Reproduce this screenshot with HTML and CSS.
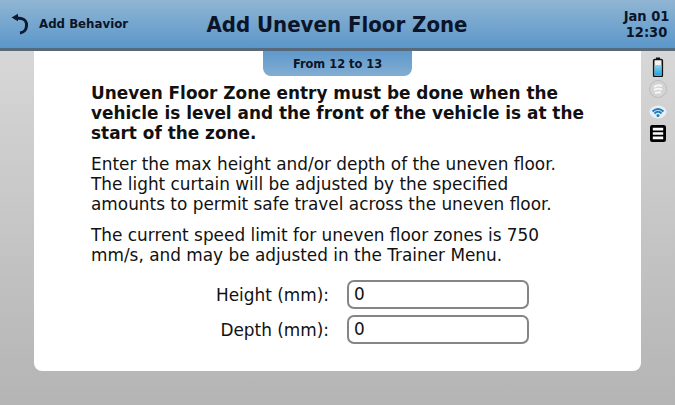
FILE: index.html
```html
<!DOCTYPE html>
<html lang="en">
<head>
  <meta charset="UTF-8" />
  <title>Add Uneven Floor Zone</title>
  <link rel="stylesheet" href="styles.css">
</head>
<body>
  <header class="topbar">
    <div class="back">
      <svg class="back-icon" width="20" height="24" viewBox="0 0 20 24">
        <path d="M1.5 5.5 L8 1.8 L8 9.2 Z" fill="#0d1a30"/>
        <path d="M5 5.8 L11 6.4 C18.6 7 18.6 20 10 21" fill="none" stroke="#0d1a30" stroke-width="3"/>
      </svg>
      <span>Add Behavior</span>
    </div>
    <h1>Add Uneven Floor Zone</h1>
    <div class="clock">Jan 01<br>12:30</div>
  </header>

  <div class="main">
    <div class="card">
      <div class="tab">From 12 to 13</div>
      <div class="copy">
        <p class="warn">Uneven Floor Zone entry must be done when the vehicle is level and the front of the vehicle is at the start of the zone.</p>
        <p>Enter the max height and/or depth of the uneven floor.<br>The light curtain will be adjusted by the specified<br>amounts to permit safe travel across the uneven floor.</p>
        <p>The current speed limit for uneven floor zones is 750<br>mm/s, and may be adjusted in the Trainer Menu.</p>
      </div>
      <div class="form">
        <label>Height (mm):</label>
        <div class="field">0</div>
        <label>Depth (mm):</label>
        <div class="field">0</div>
      </div>
    </div>

    <aside class="status">
      <svg class="battery" width="12" height="20" viewBox="0 0 12 20">
        <defs>
          <linearGradient id="charge" x1="0" y1="0" x2="0" y2="1">
            <stop offset="0" stop-color="#8fd3f0"/>
            <stop offset="1" stop-color="#1f9fdc"/>
          </linearGradient>
        </defs>
        <rect x="4" y="0.5" width="4" height="2" fill="#111"/>
        <rect x="1.7" y="2.5" width="8.6" height="17" rx="1" fill="#f4f4f4" stroke="#111" stroke-width="1.6"/>
        <rect x="2.5" y="8" width="7" height="10.7" fill="url(#charge)"/>
      </svg>
      <svg class="signal" width="18" height="18" viewBox="0 0 18 18">
        <circle cx="9" cy="9" r="8.5" fill="#d4d4d4" stroke="#bcbcbc"/>
        <path d="M5 7 Q9 4 13 6 M5 10 Q9 8 13 9.5 M6 13 Q9 12 12 12.5" fill="none" stroke="#f6f6f6" stroke-width="2"/>
      </svg>
      <svg class="wifi" width="18" height="14" viewBox="0 0 18 14">
        <ellipse cx="9" cy="7" rx="8.5" ry="6.5" fill="#e8eef2"/>
        <path d="M3.5 6.5 Q9 1.5 14.5 6.5 M5.5 8.5 Q9 5 12.5 8.5" fill="none" stroke="#1d7fc0" stroke-width="2"/>
        <circle cx="9" cy="10.5" r="1.5" fill="#1d7fc0"/>
      </svg>
      <svg class="disk" width="16" height="17" viewBox="0 0 16 17">
        <rect x="1.4" y="1.4" width="13.2" height="14.2" rx="0.8" fill="#fff" stroke="#000" stroke-width="2.8"/>
        <path d="M1 6.3 H15 M1 10.7 H15" stroke="#000" stroke-width="1.8"/>
      </svg>
    </aside>
  </div>
</body>
</html>
```
FILE: styles.css
```css
* {
  box-sizing: border-box;
}
html, body {
  height: 100%;
}
body {
  margin: 0;
  width: 675px;
  height: 405px;
  overflow: hidden;
  display: flex;
  flex-direction: column;
  font-family: "DejaVu Sans", sans-serif;
  color: #111;
  background: linear-gradient(#dcdcdc, #b4b4b4);
}
.topbar {
  height: 51px;
  flex: none;
  display: flex;
  align-items: center;
  padding-left: 10px;
  color: #0b1428;
  background: linear-gradient(#90b5d3, #5b97c9);
  border-bottom: 3px solid #566a7c;
}
.back {
  width: 130px;
  flex: none;
  display: flex;
  align-items: center;
  gap: 9px;
  font-size: 11.8px;
  font-weight: bold;
  white-space: nowrap;
}
.back-icon {
  flex: none;
}
.topbar h1 {
  flex: 1;
  margin: 0;
  font-family: "DejaVu Sans Condensed", "DejaVu Sans", sans-serif;
  font-stretch: condensed;
  font-size: 22px;
  font-weight: bold;
  text-align: center;
  padding-right: 79px;
  white-space: nowrap;
}
.clock {
  width: 62px;
  flex: none;
  font-family: "DejaVu Sans Condensed", "DejaVu Sans", sans-serif;
  font-stretch: condensed;
  font-size: 14.5px;
  font-weight: bold;
  line-height: 16px;
  text-align: center;
  padding-left: 5px;
}
.main {
  flex: 1;
  display: flex;
  align-items: flex-start;
  padding-left: 34px;
}
.card {
  width: 607px;
  height: 320px;
  background: #fff;
  border-radius: 0 0 8px 8px;
  display: flex;
  flex-direction: column;
  align-items: center;
}
.tab {
  width: 149px;
  height: 25px;
  flex: none;
  font-size: 11.4px;
  font-weight: bold;
  line-height: 27px;
  text-align: center;
  color: #0b1428;
  background: linear-gradient(#5f99cb, #82add2);
  border-radius: 0 0 8px 8px;
}
.copy {
  width: 100%;
  padding: 7px 40px 0 57px;
  font-size: 16.9px;
  line-height: 20px;
}
.copy p {
  margin: 0 0 11px;
}
.warn {
  font-weight: bold;
}
.form {
  display: grid;
  grid-template-columns: 238px 182px;
  column-gap: 18px;
  row-gap: 6px;
  align-items: center;
  font-size: 16.9px;
  margin-top: 4px;
  margin-right: 55px;
}
.form label {
  text-align: right;
}
.field {
  height: 29px;
  border: 2px solid #858585;
  border-radius: 7px;
  padding-left: 5px;
  line-height: 25px;
}
.status {
  flex: 1;
  display: flex;
  flex-direction: column;
  align-items: center;
  padding-top: 6px;
}
.signal {
  margin-top: 3px;
}
.wifi {
  margin-top: 7px;
}
.disk {
  margin-top: 6px;
}
```
